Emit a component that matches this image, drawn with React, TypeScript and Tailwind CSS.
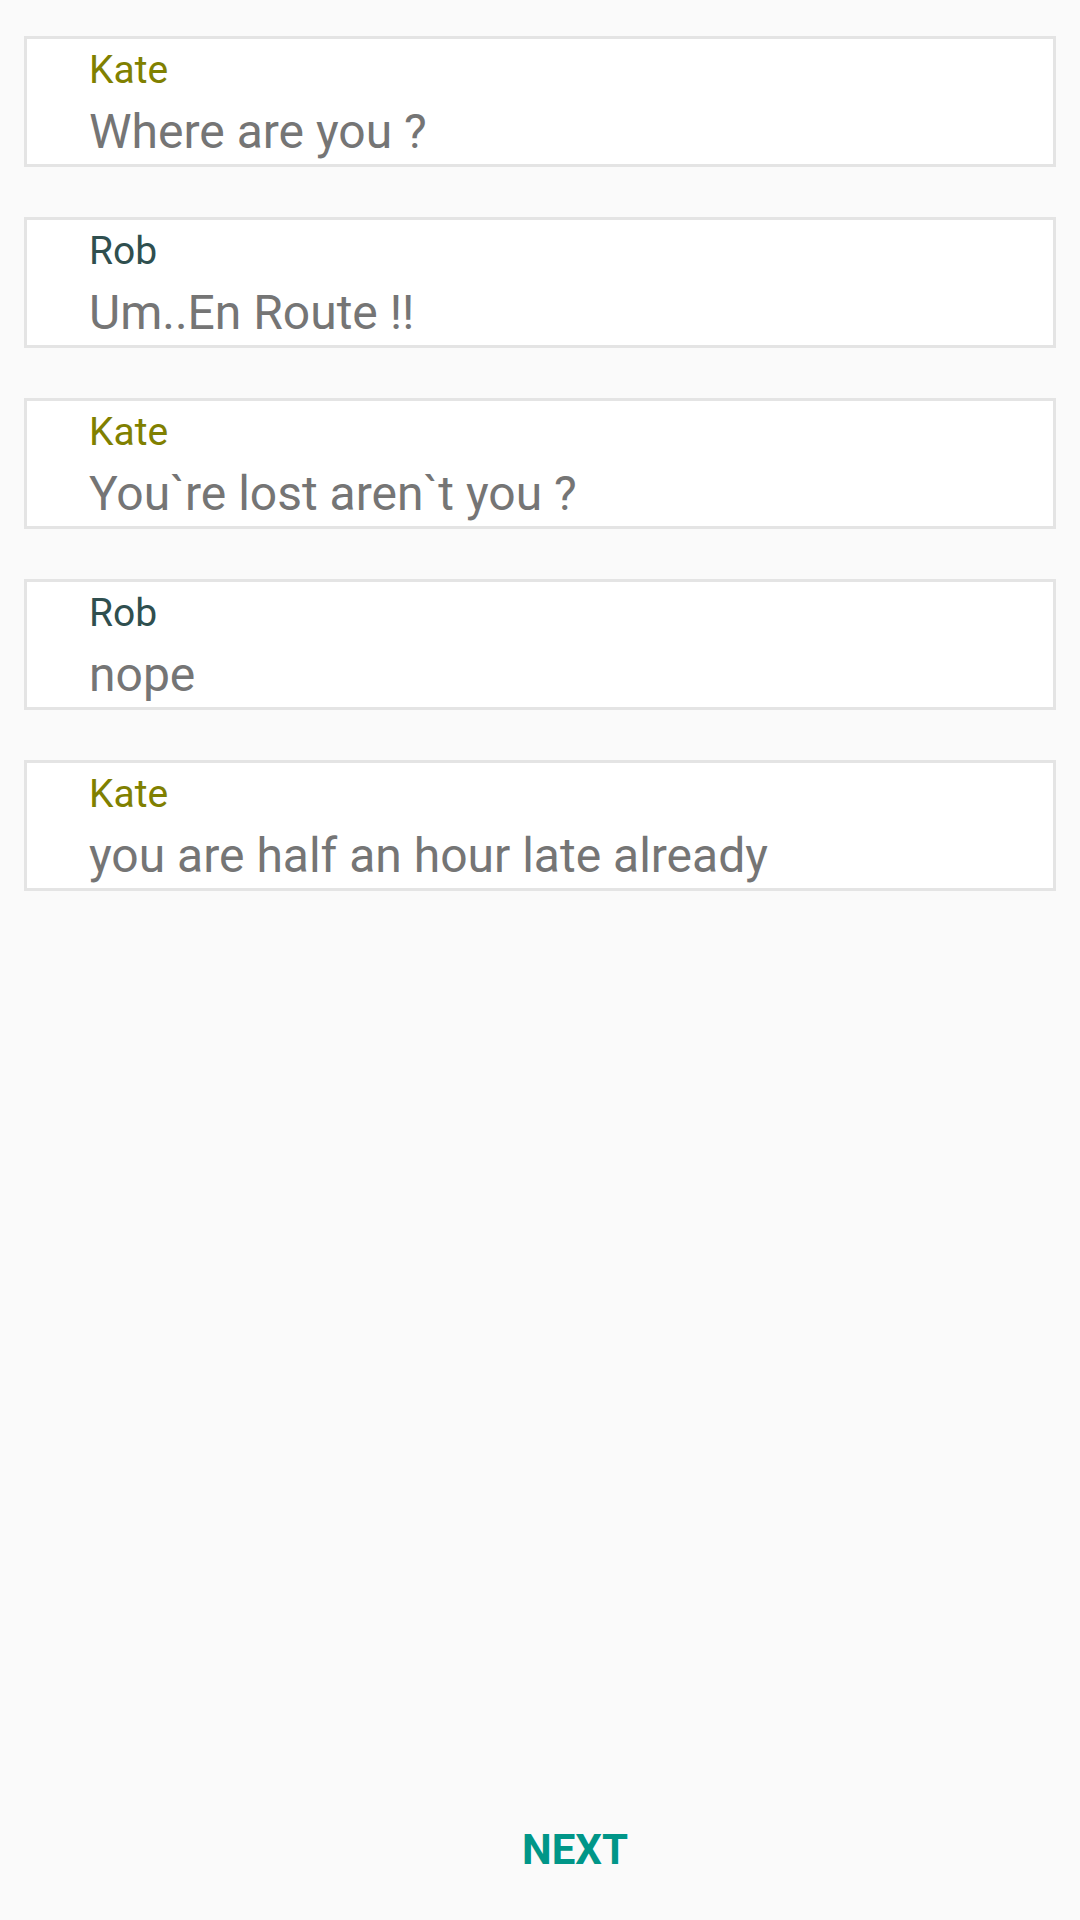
import React from "react";

type Message = {
  from: "Kate" | "Rob";
  text: string;
};

const messages: Message[] = [
  { from: "Kate", text: "Where are you ?" },
  { from: "Rob", text: "Um..En Route !!" },
  { from: "Kate", text: "You`re lost aren`t you ?" },
  { from: "Rob", text: "nope" },
  { from: "Kate", text: "you are half an hour late already" },
];

function MessageRow({ message }: { message: Message }) {
  const nameColor = message.from === "Kate" ? "text-[#808000]" : "text-[#2f4f4f]";
  return (
    <div className="flex flex-col border-[3px] border-[#e4e4e4] bg-white pb-[4px] pl-[62px] pt-[8px]">
      <p className={`text-[39px] leading-[46px] ${nameColor}`}>{message.from}</p>
      <p className="mt-[10px] text-[48px] leading-[57px] text-[#757575]">{message.text}</p>
    </div>
  );
}

export default function App() {
  return (
    <div className="flex h-[1920px] w-[1080px] flex-col bg-[#fafafa] font-['Roboto',sans-serif]">
      <div className="flex flex-col gap-[50px] px-[24px] pt-[36px]">
        {messages.map((m, i) => (
          <MessageRow key={i} message={m} />
        ))}
      </div>
      <div className="mt-auto flex justify-center pb-[46px] pl-[70px]">
        <button type="button" className="text-[42px] font-bold leading-[48px] text-[#009688]">
          NEXT
        </button>
      </div>
    </div>
  );
}
